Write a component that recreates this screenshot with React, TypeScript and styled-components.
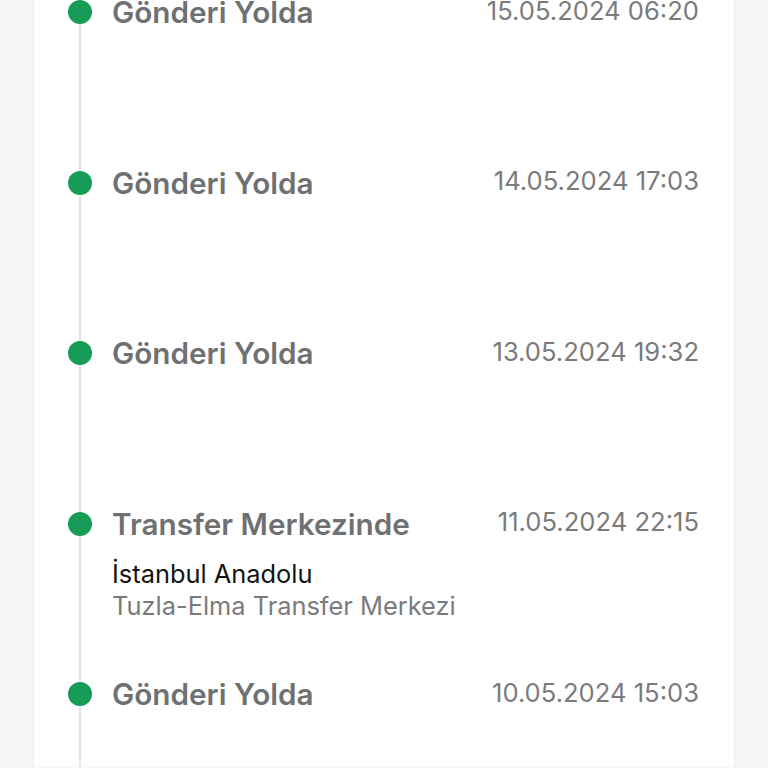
import React from 'react';
import styled, { createGlobalStyle } from 'styled-components';

const Global = createGlobalStyle`
  html, body {
    margin: 0;
    padding: 0;
    background: #f4f5f7;
    font-family: Inter, 'Noto Sans', sans-serif;
    overflow: hidden;
  }
`;

const Page = styled.div`
  padding: 0 34px;
  height: 768px;
`;

const Card = styled.div`
  background: #fff;
  min-height: 100%;
  margin-top: -1px;
  padding: 0 35px 0 34px;
  box-shadow: 1px 0 0 #eceef1, -1px 0 0 #eceef1;
  box-sizing: border-box;
`;

const List = styled.ul`
  position: relative;
  list-style: none;
  margin: 0;
  padding: 0;
  &::before {
    content: '';
    position: absolute;
    left: 11px;
    top: 14px;
    bottom: -200px;
    width: 2px;
    background: #e3e4e7;
  }
`;

const Item = styled.li`
  position: relative;
  height: 170.5px;
`;

const Head = styled.div`
  display: flex;
  align-items: center;
  height: 26px;
`;

const Dot = styled.span`
  flex: none;
  width: 24px;
  height: 24px;
  border-radius: 50%;
  background: #179c58;
  margin-right: 20px;
`;

const Title = styled.h3`
  flex: 1;
  margin: 0;
  font-size: 29.7px;
  font-weight: 600;
  color: #6f7072;
  white-space: nowrap;
`;

const Time = styled.span`
  font-size: 25.6px;
  color: #7a7b7d;
  margin-top: -4px;
  white-space: nowrap;
`;

const Detail = styled.div`
  padding-left: 44px;
  margin-top: 21px;
  font-size: 25.4px;
  line-height: 32px;
`;

const Place = styled.div`
  color: #141414;
`;

const Center = styled.div`
  color: #7a7b7d;
`;

type Event = {
  title: string;
  time: string;
  place?: string;
  center?: string;
};

const events: Event[] = [
  { title: 'Gönderi Yolda', time: '15.05.2024 06:20' },
  { title: 'Gönderi Yolda', time: '14.05.2024 17:03' },
  { title: 'Gönderi Yolda', time: '13.05.2024 19:32' },
  {
    title: 'Transfer Merkezinde',
    time: '11.05.2024 22:15',
    place: 'İstanbul Anadolu',
    center: 'Tuzla-Elma Transfer Merkezi',
  },
  { title: 'Gönderi Yolda', time: '10.05.2024 15:03' },
];

export default function App() {
  return (
    <>
      <Global />
      <Page>
        <Card>
          <List>
            {events.map((ev, i) => (
              <Item key={i}>
                <Head>
                  <Dot />
                  <Title>{ev.title}</Title>
                  <Time>{ev.time}</Time>
                </Head>
                {ev.place && (
                  <Detail>
                    <Place>{ev.place}</Place>
                    <Center>{ev.center}</Center>
                  </Detail>
                )}
              </Item>
            ))}
          </List>
        </Card>
      </Page>
    </>
  );
}
